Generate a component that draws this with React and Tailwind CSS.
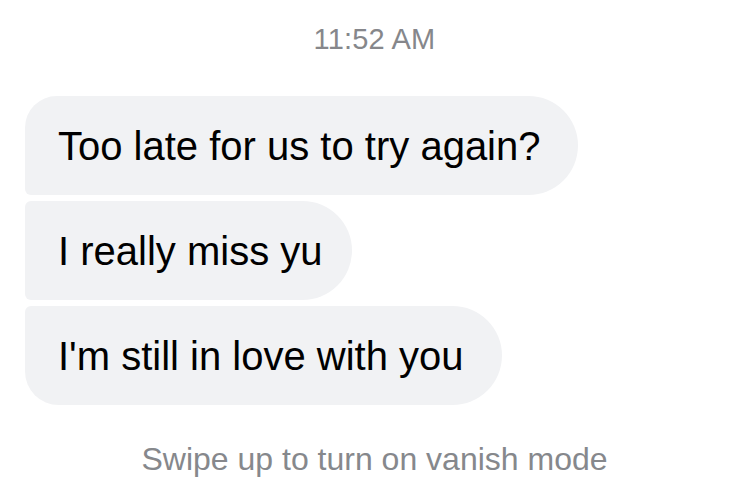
export default function App() {
  const font = { fontFamily: '"Liberation Sans", Arial, sans-serif' }

  return (
    <div
      className="w-[735px] h-[504px] bg-white flex flex-col overflow-hidden"
      style={font}
    >
      {/* Timestamp */}
      <div className="pt-[22px] pl-[14px] text-center text-[29px] leading-[34px] tracking-[0.2px] text-[#86878b]">
        11:52 AM
      </div>

      {/* Bubbles */}
      <div className="mt-[40px] pl-[25px] flex flex-col items-start gap-[6px]">
        <div className="h-[99px] flex items-center pl-[33px] pr-[37px] bg-[#f1f2f4] text-black text-[40px] rounded-tl-[32px] rounded-bl-[6px] rounded-r-[50px]">
          Too late for us to try again?
        </div>
        <div className="h-[99px] flex items-center pl-[33px] pr-[29px] bg-[#f1f2f4] text-black text-[40px] rounded-l-[6px] rounded-r-[50px]">
          I really miss yu
        </div>
        <div className="h-[99px] flex items-center pl-[33px] pr-[38px] bg-[#f1f2f4] text-black text-[40px] rounded-tl-[6px] rounded-bl-[34px] rounded-r-[50px]">
          I'm still in love with you
        </div>
      </div>

      {/* Footer hint */}
      <div className="mt-[35px] pl-[14px] text-center text-[32px] leading-[38px] text-[#86888c]">
        Swipe up to turn on vanish mode
      </div>
    </div>
  )
}
